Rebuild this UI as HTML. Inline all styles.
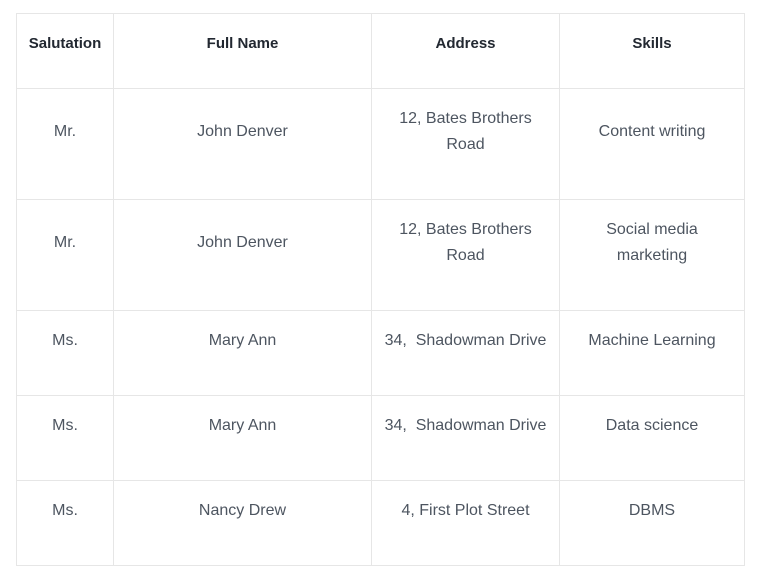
<!DOCTYPE html>
<html><head><meta charset="utf-8"><style>
body{margin:0;background:#fff;width:760px;height:577px;position:relative;font-family:"Liberation Sans",sans-serif;font-size:16px;}
table{position:absolute;left:16px;top:13px;border-collapse:collapse;table-layout:fixed;width:728px;}
td,th{border:1px solid #e6e6e6;text-align:center;vertical-align:top;padding:17px 8px 0;line-height:26px;color:#4d5560;font-weight:normal;box-sizing:border-box;}
th{color:#222831;font-weight:bold;font-size:15px;}
.c{display:flex;align-items:center;justify-content:center;height:52px;}
</style></head><body>
<table>
<colgroup><col style="width:97px"><col style="width:258px"><col style="width:188px"><col style="width:185px"></colgroup>
<tr style="height:75px"><th>Salutation</th><th>Full Name</th><th>Address</th><th>Skills</th></tr>
<tr style="height:111px"><td><div class="c">Mr.</div></td><td><div class="c">John Denver</div></td><td><div class="c">12, Bates Brothers<br>Road</div></td><td><div class="c">Content writing</div></td></tr>
<tr style="height:111px"><td><div class="c">Mr.</div></td><td><div class="c">John Denver</div></td><td><div class="c">12, Bates Brothers<br>Road</div></td><td><div class="c">Social media<br>marketing</div></td></tr>
<tr style="height:85px"><td>Ms.</td><td>Mary Ann</td><td>34,&nbsp; Shadowman Drive</td><td>Machine Learning</td></tr>
<tr style="height:85px"><td>Ms.</td><td>Mary Ann</td><td>34,&nbsp; Shadowman Drive</td><td>Data science</td></tr>
<tr style="height:85px"><td>Ms.</td><td>Nancy Drew</td><td>4, First Plot Street</td><td>DBMS</td></tr>
</table>
</body></html>
